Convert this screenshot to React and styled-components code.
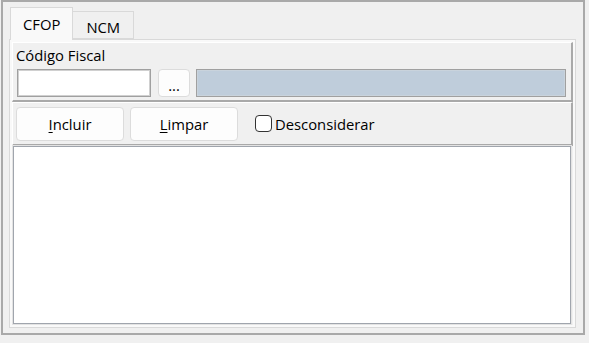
import React, { useState } from "react";
import styled, { createGlobalStyle } from "styled-components";

const GlobalStyle = createGlobalStyle`
  html, body {
    margin: 0;
    background: #f0f0f0;
    font-family: "Open Sans", "Noto Sans", sans-serif;
    font-size: 14.8px;
    color: #000;
  }
  * { box-sizing: border-box; }
`;

const Frame = styled.div`
  width: 584px;
  height: 335px;
  margin-left: 1px;
  border: 2px solid #a9a9a9;
  background: #f0f0f0;
  padding: 4px 7px 5px 6px;
  display: flex;
  flex-direction: column;
`;

const TabStrip = styled.div`
  display: flex;
  align-items: flex-end;
  height: 33px;
  padding-left: 1px;
`;

const Tab = styled.div`
  height: ${(p) => (p.$active ? "33px" : "28px")};
  padding: ${(p) => (p.$active ? "0 12px" : "4px 13px 0")};
  margin-bottom: ${(p) => (p.$active ? "-1px" : "0")};
  display: flex;
  align-items: center;
  background: ${(p) => (p.$active ? "#f9f9f9" : "#f0f0f0")};
  border: 1px solid #d9d9d9;
  border-bottom: ${(p) => (p.$active ? "none" : "1px solid #d9d9d9")};
  border-left: ${(p) => (p.$first ? "1px solid #d9d9d9" : "none")};
  position: relative;
  z-index: ${(p) => (p.$active ? 1 : 0)};
  cursor: default;
`;

const TabPage = styled.div`
  flex: 1;
  border: 1px solid #d9d9d9;
  background: #f9f9f9;
  padding: 2px;
  display: flex;
  flex-direction: column;
`;

const Inner = styled.div`
  flex: 1;
  background: #f0f0f0;
  display: flex;
  flex-direction: column;
`;

const Section = styled.div`
  border-top: 1px solid #ffffff;
  border-right: 2px solid #a9a9a9;
  border-bottom: 2px solid #a9a9a9;
  border-left: 1px solid #ffffff;
  padding: ${(p) => p.$pad};
  display: flex;
  flex-direction: column;
`;

const Label = styled.div`
  line-height: 19px;
  padding-left: 2px;
  height: 26px;
  padding-top: 3px;
`;

const FieldRow = styled.div`
  display: flex;
  align-items: center;
  gap: 6px;
`;

const TextInput = styled.input`
  width: 134px;
  height: 28px;
  border: 1px solid #a0a0a0;
  outline: 1px solid #d0d0d0;
  outline-offset: -2px;
  background: #fff;
  margin: 0 0 0 3px;
  font: inherit;
`;

const DotsButton = styled.button`
  width: 32px;
  height: 28px;
  border: 1px solid #dcdcdc;
  border-radius: 4px;
  background: #fdfdfd;
  font: inherit;
  line-height: 1;
  padding: 4px 0 0;
  margin-left: 1px;
  color: #000;
`;

const ReadOnlyField = styled.div`
  flex: 1;
  height: 28px;
  background: #bfcddb;
  border: 1px solid #a0a0a0;
  outline: 1px solid #c9d3dc;
  outline-offset: -2px;
  margin-right: 5px;
`;

const ButtonRow = styled.div`
  display: flex;
  align-items: center;
  gap: 6px;
  height: 41px;
  padding-left: 3px;
`;

const ActionButton = styled.button`
  width: 108px;
  height: 34px;
  border: 1px solid #dcdcdc;
  border-radius: 4px;
  background: #fdfdfd;
  font: inherit;
  color: #000;
  padding: 0;
  u { text-decoration: underline; text-underline-offset: 2px; }
`;

const CheckLabel = styled.label`
  display: flex;
  align-items: center;
  margin-left: 11px;
  cursor: default;
`;

const Box = styled.span`
  width: 17px;
  height: 17px;
  border: 1px solid #333;
  border-radius: 4px;
  background: ${(p) => (p.$checked ? "#005fb8" : "#fff")};
  margin-right: 3px;
  display: inline-block;
`;

const ListBox = styled.div`
  flex: 1;
  background: #fff;
  border: 1px solid #a0a5ad;
  outline: 1px solid #e3e3e3;
  margin: 0 2px 1px 1px;
`;

export default function App() {
  const [tab, setTab] = useState("CFOP");
  const [ignore, setIgnore] = useState(false);
  return (
    <>
      <GlobalStyle />
      <Frame>
        <TabStrip>
          {["CFOP", "NCM"].map((t, i) => (
            <Tab key={t} $first={i === 0} $active={tab === t} onClick={() => setTab(t)}>
              {t}
            </Tab>
          ))}
        </TabStrip>
        <TabPage>
          <Inner>
            <Section $pad="0 0 3px 1px">
              <Label>Código Fiscal</Label>
              <FieldRow>
                <TextInput />
                <DotsButton>...</DotsButton>
                <ReadOnlyField />
              </FieldRow>
            </Section>
            <Section $pad="0">
              <ButtonRow>
                <ActionButton>
                  <u>I</u>ncluir
                </ActionButton>
                <ActionButton>
                  <u>L</u>impar
                </ActionButton>
                <CheckLabel onClick={() => setIgnore(!ignore)}>
                  <Box $checked={ignore} />
                  Desconsiderar
                </CheckLabel>
              </ButtonRow>
            </Section>
            <ListBox />
          </Inner>
        </TabPage>
      </Frame>
    </>
  );
}
